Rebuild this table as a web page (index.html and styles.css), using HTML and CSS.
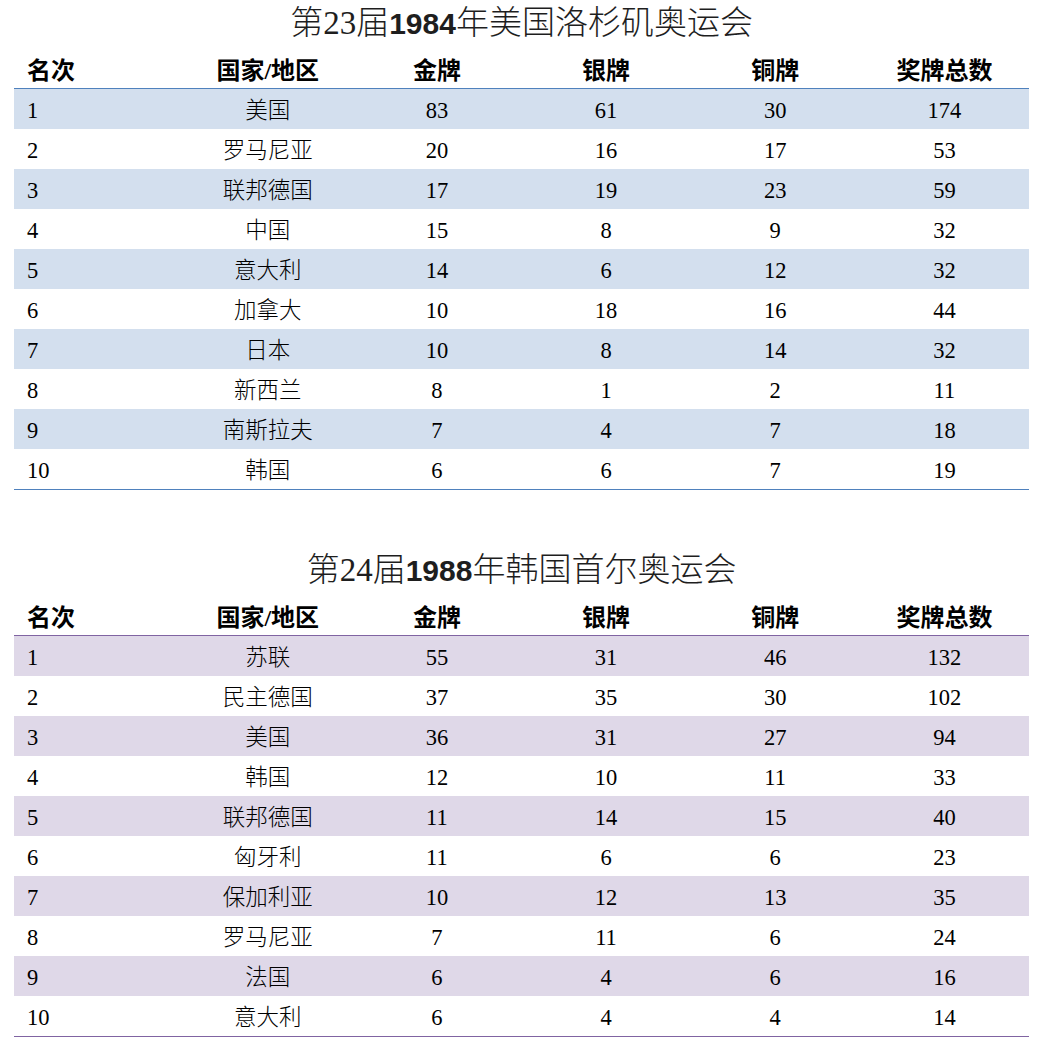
FILE: index.html
```html
<!DOCTYPE html>
<html lang="zh-CN">
<head>
<meta charset="utf-8">
<title>奥运会奖牌榜</title>
<link rel="stylesheet" href="styles.css">
</head>
<body>
<div class="page">
  <section class="medal-block blue">
    <h2 class="title">第23届<span class="year">1984</span>年美国洛杉矶奥运会</h2>
    <table class="medals">
      <thead>
        <tr><th class="rank">名次</th><th>国家/地区</th><th>金牌</th><th>银牌</th><th>铜牌</th><th>奖牌总数</th></tr>
      </thead>
      <tbody>
        <tr><td class="rank">1</td><td>美国</td><td>83</td><td>61</td><td>30</td><td>174</td></tr>
        <tr><td class="rank">2</td><td>罗马尼亚</td><td>20</td><td>16</td><td>17</td><td>53</td></tr>
        <tr><td class="rank">3</td><td>联邦德国</td><td>17</td><td>19</td><td>23</td><td>59</td></tr>
        <tr><td class="rank">4</td><td>中国</td><td>15</td><td>8</td><td>9</td><td>32</td></tr>
        <tr><td class="rank">5</td><td>意大利</td><td>14</td><td>6</td><td>12</td><td>32</td></tr>
        <tr><td class="rank">6</td><td>加拿大</td><td>10</td><td>18</td><td>16</td><td>44</td></tr>
        <tr><td class="rank">7</td><td>日本</td><td>10</td><td>8</td><td>14</td><td>32</td></tr>
        <tr><td class="rank">8</td><td>新西兰</td><td>8</td><td>1</td><td>2</td><td>11</td></tr>
        <tr><td class="rank">9</td><td>南斯拉夫</td><td>7</td><td>4</td><td>7</td><td>18</td></tr>
        <tr><td class="rank">10</td><td>韩国</td><td>6</td><td>6</td><td>7</td><td>19</td></tr>
      </tbody>
    </table>
  </section>
  <section class="medal-block purple">
    <h2 class="title">第24届<span class="year">1988</span>年韩国首尔奥运会</h2>
    <table class="medals">
      <thead>
        <tr><th class="rank">名次</th><th>国家/地区</th><th>金牌</th><th>银牌</th><th>铜牌</th><th>奖牌总数</th></tr>
      </thead>
      <tbody>
        <tr><td class="rank">1</td><td>苏联</td><td>55</td><td>31</td><td>46</td><td>132</td></tr>
        <tr><td class="rank">2</td><td>民主德国</td><td>37</td><td>35</td><td>30</td><td>102</td></tr>
        <tr><td class="rank">3</td><td>美国</td><td>36</td><td>31</td><td>27</td><td>94</td></tr>
        <tr><td class="rank">4</td><td>韩国</td><td>12</td><td>10</td><td>11</td><td>33</td></tr>
        <tr><td class="rank">5</td><td>联邦德国</td><td>11</td><td>14</td><td>15</td><td>40</td></tr>
        <tr><td class="rank">6</td><td>匈牙利</td><td>11</td><td>6</td><td>6</td><td>23</td></tr>
        <tr><td class="rank">7</td><td>保加利亚</td><td>10</td><td>12</td><td>13</td><td>35</td></tr>
        <tr><td class="rank">8</td><td>罗马尼亚</td><td>7</td><td>11</td><td>6</td><td>24</td></tr>
        <tr><td class="rank">9</td><td>法国</td><td>6</td><td>4</td><td>6</td><td>16</td></tr>
        <tr><td class="rank">10</td><td>意大利</td><td>6</td><td>4</td><td>4</td><td>14</td></tr>
      </tbody>
    </table>
  </section>
</div>
</body>
</html>
```
FILE: styles.css
```css
html, body {
  margin: 0;
  padding: 0;
  background: #ffffff;
}

body {
  font-family: "Liberation Serif", "Noto Sans CJK SC", serif;
  color: #000000;
}

.page {
  width: 1015px;
  padding-left: 14px;
}

.medal-block + .medal-block {
  margin-top: 57px;
}

.title {
  margin: 0;
  height: 48px;
  line-height: 46px;
  text-align: center;
  font-size: 33px;
  font-weight: 300;
  color: #1e1e1e;
  font-family: "Liberation Serif", "Noto Sans CJK SC", serif;
}

.title .year {
  font-family: "Liberation Sans", "Noto Sans CJK SC", sans-serif;
  font-weight: 700;
  font-size: 30px;
}

.medals {
  width: 1015px;
  table-layout: fixed;
  border-collapse: separate;
  border-spacing: 0;
}

.medals th,
.medals td {
  padding: 0;
  text-align: center;
  white-space: nowrap;
}

.medals th {
  height: 33px;
  padding-top: 7px;
  line-height: 33px;
  font-size: 24px;
  font-weight: 700;
  vertical-align: middle;
}

.medals td {
  height: 36px;
  padding-top: 4px;
  line-height: 36px;
  font-size: 22.5px;
  font-weight: 300;
  vertical-align: middle;
}

.medals .rank {
  text-align: left;
  padding-left: 13px;
}

.blue th { border-bottom: 1px solid #4f81bd; }
.blue tbody tr:nth-child(odd) td { background: #d3dfee; }
.blue tbody tr:last-child td { border-bottom: 1px solid #4f81bd; }

.purple th { border-bottom: 1px solid #8064a2; }
.purple tbody tr:nth-child(odd) td { background: #dfd8e8; }
.purple tbody tr:last-child td { border-bottom: 1px solid #8064a2; }
```
